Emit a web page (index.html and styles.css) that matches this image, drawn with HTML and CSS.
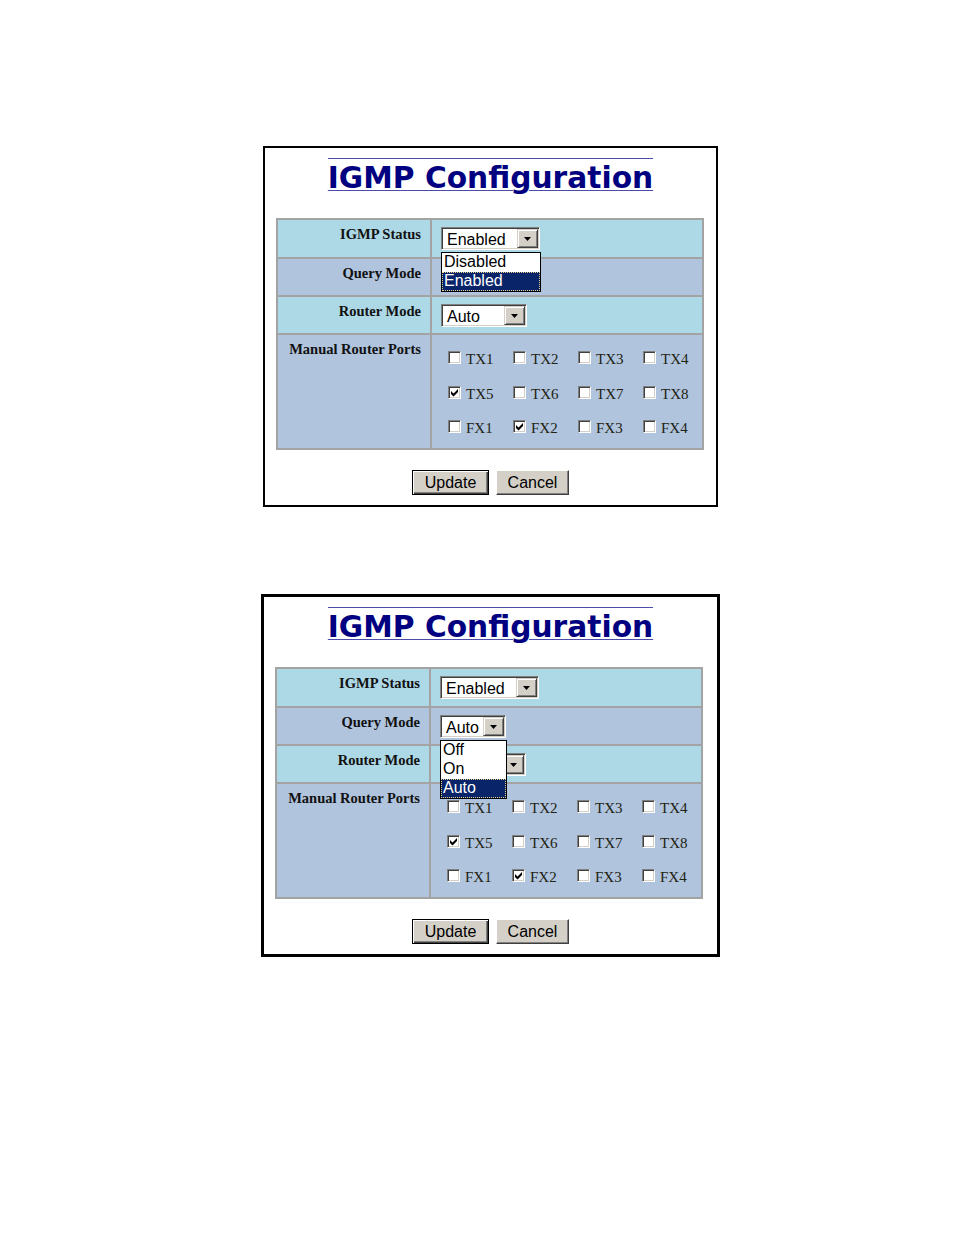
FILE: index.html
```html
<!DOCTYPE html>
<html>
<head>
<meta charset="utf-8">
<title>IGMP Configuration</title>
<link rel="stylesheet" href="styles.css">
</head>
<body>
<div class="page">

  <div class="fig fig1">
    <h1 class="title"><span>IGMP Configuration</span></h1>
    <table class="cfg">
      <tr class="r1 blue">
        <th>IGMP Status</th>
        <td>
          <div class="dd">
            <div class="sel w99"><span class="val">Enabled</span><span class="arr"><svg width="7" height="4" viewBox="0 0 7 4"><path d="M0 0H7L3.5 4Z"/></svg></span></div>
            <div class="list w100">
              <div class="opt">Disabled</div>
              <div class="opt on">Enabled</div>
            </div>
          </div>
        </td>
      </tr>
      <tr class="r2 steel">
        <th>Query Mode</th>
        <td>
          <div class="dd">
            <div class="sel w66"><span class="val"></span><span class="arr"><svg width="7" height="4" viewBox="0 0 7 4"><path d="M0 0H7L3.5 4Z"/></svg></span></div>
          </div>
        </td>
      </tr>
      <tr class="r3 blue">
        <th>Router Mode</th>
        <td>
          <div class="dd">
            <div class="sel w86"><span class="val">Auto</span><span class="arr"><svg width="7" height="4" viewBox="0 0 7 4"><path d="M0 0H7L3.5 4Z"/></svg></span></div>
          </div>
        </td>
      </tr>
      <tr class="r4 steel">
        <th>Manual Router Ports</th>
        <td>
          <div class="ports">
            <div class="port"><span class="cb"></span><span class="pl">TX1</span></div>
            <div class="port"><span class="cb"></span><span class="pl">TX2</span></div>
            <div class="port"><span class="cb"></span><span class="pl">TX3</span></div>
            <div class="port"><span class="cb"></span><span class="pl">TX4</span></div>
            <div class="port"><span class="cb"><svg width="9" height="9" viewBox="0 0 9 9"><path d="M1 3L3.5 5.5L8 1V4L3.5 8.5L1 6Z"/></svg></span><span class="pl">TX5</span></div>
            <div class="port"><span class="cb"></span><span class="pl">TX6</span></div>
            <div class="port"><span class="cb"></span><span class="pl">TX7</span></div>
            <div class="port"><span class="cb"></span><span class="pl">TX8</span></div>
            <div class="port"><span class="cb"></span><span class="pl">FX1</span></div>
            <div class="port"><span class="cb"><svg width="9" height="9" viewBox="0 0 9 9"><path d="M1 3L3.5 5.5L8 1V4L3.5 8.5L1 6Z"/></svg></span><span class="pl">FX2</span></div>
            <div class="port"><span class="cb"></span><span class="pl">FX3</span></div>
            <div class="port"><span class="cb"></span><span class="pl">FX4</span></div>
          </div>
        </td>
      </tr>
    </table>
    <div class="btns"><span class="btn def">Update</span><span class="btn can">Cancel</span></div>
  </div>

  <div class="fig fig2">
    <h1 class="title"><span>IGMP Configuration</span></h1>
    <table class="cfg">
      <tr class="r1 blue">
        <th>IGMP Status</th>
        <td>
          <div class="dd">
            <div class="sel w99"><span class="val">Enabled</span><span class="arr"><svg width="7" height="4" viewBox="0 0 7 4"><path d="M0 0H7L3.5 4Z"/></svg></span></div>
          </div>
        </td>
      </tr>
      <tr class="r2 steel">
        <th>Query Mode</th>
        <td>
          <div class="dd">
            <div class="sel w66"><span class="val">Auto</span><span class="arr"><svg width="7" height="4" viewBox="0 0 7 4"><path d="M0 0H7L3.5 4Z"/></svg></span></div>
            <div class="list w67">
              <div class="opt">Off</div>
              <div class="opt">On</div>
              <div class="opt on">Auto</div>
            </div>
          </div>
        </td>
      </tr>
      <tr class="r3 blue">
        <th>Router Mode</th>
        <td>
          <div class="dd">
            <div class="sel w86"><span class="val"></span><span class="arr"><svg width="7" height="4" viewBox="0 0 7 4"><path d="M0 0H7L3.5 4Z"/></svg></span></div>
          </div>
        </td>
      </tr>
      <tr class="r4 steel">
        <th>Manual Router Ports</th>
        <td>
          <div class="ports">
            <div class="port"><span class="cb"></span><span class="pl">TX1</span></div>
            <div class="port"><span class="cb"></span><span class="pl">TX2</span></div>
            <div class="port"><span class="cb"></span><span class="pl">TX3</span></div>
            <div class="port"><span class="cb"></span><span class="pl">TX4</span></div>
            <div class="port"><span class="cb"><svg width="9" height="9" viewBox="0 0 9 9"><path d="M1 3L3.5 5.5L8 1V4L3.5 8.5L1 6Z"/></svg></span><span class="pl">TX5</span></div>
            <div class="port"><span class="cb"></span><span class="pl">TX6</span></div>
            <div class="port"><span class="cb"></span><span class="pl">TX7</span></div>
            <div class="port"><span class="cb"></span><span class="pl">TX8</span></div>
            <div class="port"><span class="cb"></span><span class="pl">FX1</span></div>
            <div class="port"><span class="cb"><svg width="9" height="9" viewBox="0 0 9 9"><path d="M1 3L3.5 5.5L8 1V4L3.5 8.5L1 6Z"/></svg></span><span class="pl">FX2</span></div>
            <div class="port"><span class="cb"></span><span class="pl">FX3</span></div>
            <div class="port"><span class="cb"></span><span class="pl">FX4</span></div>
          </div>
        </td>
      </tr>
    </table>
    <div class="btns"><span class="btn def">Update</span><span class="btn can">Cancel</span></div>
  </div>

</div>
</body>
</html>
```
FILE: styles.css
```css
body {
  margin: 0;
  background: #fff;
}

.page {
  padding-top: 146px;
}

.fig {
  box-sizing: border-box;
  border: 2px solid #000;
  width: 455px;
  height: 361px;
  margin-left: 263px;
  padding-top: 10px;
}

.fig2 {
  border-width: 3px;
  width: 459px;
  height: 363px;
  margin-left: 261px;
  margin-top: 87px;
}

.title {
  margin: 0;
  height: 39px;
  text-align: center;
  font: bold 29.7px/38px "DejaVu Sans", Verdana, sans-serif;
  color: #000080;
}

.title span {
  display: inline-block;
  vertical-align: top;
  border-top: 1px solid #4b4baa;
  text-decoration: underline;
  text-decoration-color: #4b4baa;
  text-decoration-thickness: 1px;
  text-underline-offset: 2px;
}

.cfg {
  margin: 21px 0 0 11px;
  width: 428px;
  border-collapse: separate;
  border-spacing: 2px;
  background: #a3a3a3;
  table-layout: fixed;
}

.cfg th {
  width: 152px;
  box-sizing: border-box;
  padding: 6px 9px 0 0;
  text-align: right;
  vertical-align: top;
  white-space: nowrap;
  font: bold 14.5px/16px "Liberation Serif", "Times New Roman", serif;
  color: #111;
}

.cfg td {
  padding: 7px 0 0 9px;
  vertical-align: top;
}

.r1 { height: 37px; }
.r2, .r3 { height: 36px; }
.r4 { height: 113px; }

.blue th, .blue td { background: #add8e6; }
.steel th, .steel td { background: #b0c4de; }

/* select widget */
.dd {
  position: relative;
}

.sel {
  box-sizing: border-box;
  display: flex;
  height: 23px;
  padding: 1px;
  border: 1px solid;
  border-color: #808080 #fff #fff #808080;
  box-shadow: inset 1px 1px #404040, inset -1px -1px #d4d0c8;
  background: #fff;
}

.w99 { width: 99px; }
.w86 { width: 86px; }
.w66 { width: 66px; }

.val {
  flex: 1;
  padding: 3px 0 0 4px;
  font: 16px/15px "Liberation Sans", Arial, sans-serif;
  color: #000;
}

.arr {
  box-sizing: border-box;
  width: 21px;
  height: 19px;
  display: flex;
  align-items: center;
  justify-content: center;
  background: #d4d0c8;
  border: 1px solid;
  border-color: #d4d0c8 #404040 #404040 #d4d0c8;
  box-shadow: inset 1px 1px #fff, inset -1px -1px #808080;
}

.arr svg {
  display: block;
  fill: #000;
}

.list {
  position: absolute;
  z-index: 5;
  left: 0;
  top: 25px;
  box-sizing: border-box;
  border: 1px solid #000;
  background: #fff;
}

.w100 { width: 100px; }
.w67 { width: 67px; }

.opt {
  height: 19px;
  padding-left: 2px;
  font: 16px/17px "Liberation Sans", Arial, sans-serif;
  color: #000;
}

.opt.on {
  background: #0a246a;
  color: #fff;
  outline: 1px dotted #e8d48a;
  outline-offset: -1px;
}

/* ports */
.ports {
  display: grid;
  grid-template-columns: repeat(4, 65px);
  grid-auto-rows: 15px;
  row-gap: 19.5px;
  margin: 9px 0 0 7px;
}

.port {
  display: flex;
  align-items: flex-start;
}

.cb {
  box-sizing: border-box;
  width: 13px;
  height: 13px;
  padding: 1px;
  border: 1px solid;
  border-color: #808080 #fff #fff #808080;
  box-shadow: inset 1px 1px #404040, inset -1px -1px #d4d0c8;
  background: #fff;
  flex: none;
}

.cb svg {
  display: block;
  fill: #000;
}

.pl {
  margin-left: 5px;
  margin-top: 1px;
  font: 15px/15px "Liberation Serif", "Times New Roman", serif;
  color: #222210;
}

/* buttons */
.btns {
  display: flex;
  justify-content: center;
  gap: 7px;
  margin-top: 20px;
}

.btn {
  box-sizing: border-box;
  height: 25px;
  text-align: center;
  font: 16px/23px "Liberation Sans", Arial, sans-serif;
  color: #000;
  background: #d4d0c8;
  border: 1px solid;
  border-color: #fff #404040 #404040 #fff;
  box-shadow: inset -1px -1px #808080;
}

.btn.def {
  width: 77px;
  border-color: #000;
  box-shadow: inset 1px 1px #fff, inset -1px -1px #404040, inset -2px -2px #808080;
}

.btn.can {
  width: 73px;
}
```
